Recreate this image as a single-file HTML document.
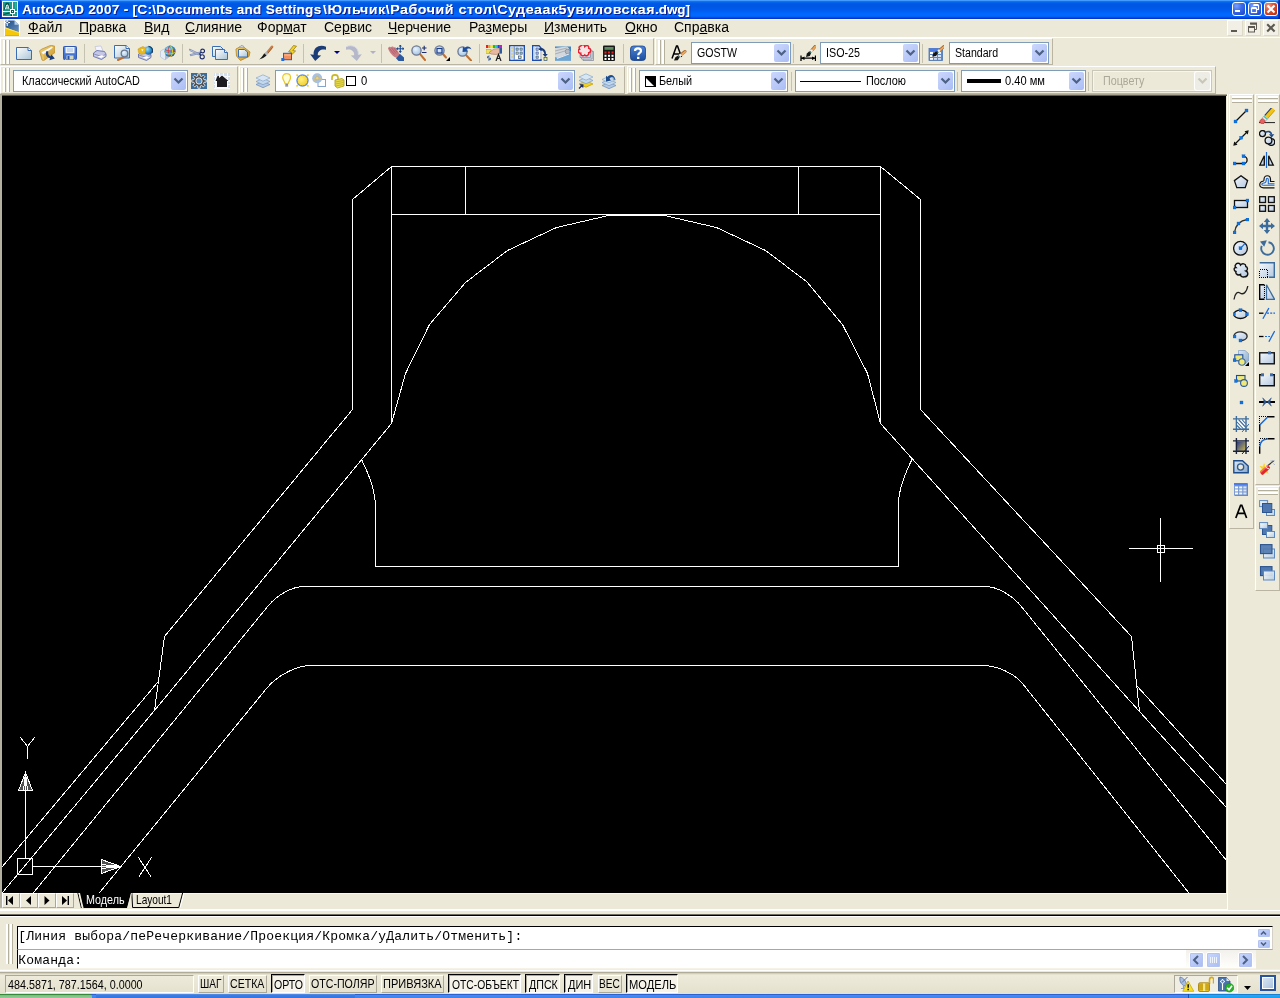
<!DOCTYPE html><html><head><meta charset="utf-8"><title>AutoCAD 2007</title><style>
*{box-sizing:border-box;margin:0;padding:0}
html,body{width:1280px;height:998px;overflow:hidden;background:#ECE9D8;font-family:"Liberation Sans",sans-serif;}
#root{position:absolute;left:0;top:0;width:1280px;height:998px;overflow:hidden;will-change:transform}
.a{position:absolute}
.t{position:absolute;white-space:pre;line-height:1}
#title{left:0;top:0;width:1280px;height:19px;background:linear-gradient(#459AFD 0px,#459AFD 1px,#0A72FA 1px,#0A72FA 2px,#0562EA 2px,#0562EA 3px,#0159E4 3px,#0159E4 4px,#0057E3 4px,#0057E3 5px,#0057E3 5px,#0057E3 6px,#0057E4 6px,#0057E4 7px,#0058E6 7px,#0058E6 8px,#0059E8 8px,#0059E8 9px,#005AEB 9px,#005AEB 10px,#005DF0 10px,#005DF0 11px,#0060F4 11px,#0060F4 12px,#0064F9 12px,#0064F9 13px,#0067FD 13px,#0067FD 14px,#0068FE 14px,#0068FE 15px,#0068FE 15px,#0068FE 16px,#0062F4 16px,#0062F4 17px,#004CDC 17px,#004CDC 18px,#0035CC 18px,#0035CC 19px)}
#title .t{color:#fff;font-weight:bold;font-size:13px;top:3px;transform-origin:0 0;text-shadow:1px 1px 0 #0A1C8C,.4px 0 0 #fff}
#menu{left:0;top:19px;width:1280px;height:18px;background:#ECE9D8;border-top:1px solid #FBF4DD}
#menu .t{font-size:14px;top:0px;color:#000}
#menu u{text-decoration:underline;text-underline-offset:1px}
.tb{position:absolute;background:#EDEADA;border-top:1px solid #fff;border-left:1px solid #fff;border-right:1px solid #B9B5A2;border-bottom:1px solid #B9B5A2;}
.gripv{position:absolute;width:3px;border-right:1px solid #B4B09C;background:#fff}
.griph{position:absolute;height:3px;border-bottom:1px solid #B4B09C;background:#fff}
.sep{position:absolute;width:1px;background:#C5C2B2}
.cb{position:absolute;background:#fff;border:1px solid #7F9DB9;}
.cb .dd{position:absolute;right:1px;top:1px;bottom:1px;width:15px;border-radius:2px;background:linear-gradient(135deg,#CBD7FC,#B9C9F8 55%,#A9BCF4)}
.cb .dd svg{position:absolute;left:2px;top:5px}
.cb.dis{background:#ECE9D8;border-color:#C9C7BA;box-shadow:1px 1px 0 #F8F6EC inset,-1px -1px 0 #F8F6EC inset}
.cb.dis .dd{background:#EEEDE5;box-shadow:0 0 0 1px #fff}
#draw{left:2px;top:96px;width:1224px;height:797px;background:#000}
</style></head><body><div id="root">
<div id="title" class="a"><span class="t" style="left:22px;letter-spacing:0.3px;transform:scaleX(1.0391)">AutoCAD 2007 - [C:\Documents and Settings</span><span class="t" style="left:322.5px;letter-spacing:0.5px;transform:scaleX(1.0927)">\Юльчик\Рабочий стол\Судеаак5увиловская</span><span class="t" style="left:655px;letter-spacing:0px;transform:scaleX(1.0313)">.dwg]</span></div>
<div id="menu" class="a">
<span class="t" style="left:28px"><u>Ф</u>айл</span>
<span class="t" style="left:79px"><u>П</u>равка</span>
<span class="t" style="left:144px"><u>В</u>ид</span>
<span class="t" style="left:185px"><u>С</u>лияние</span>
<span class="t" style="left:257px">Фор<u>м</u>ат</span>
<span class="t" style="left:324px">Се<u>р</u>вис</span>
<span class="t" style="left:388px"><u>Ч</u>ерчение</span>
<span class="t" style="left:469px">Ра<u>з</u>меры</span>
<span class="t" style="left:544px"><u>И</u>зменить</span>
<span class="t" style="left:625px"><u>О</u>кно</span>
<span class="t" style="left:674px">Спр<u>а</u>вка</span>
</div>
<div class="a" style="left:0;top:37px;width:1280px;height:1px;background:#fff"></div>
<div class="a" style="left:1278px;top:0;width:2px;height:19px;background:linear-gradient(90deg,rgba(0,30,160,.45),rgba(0,20,140,.85))"></div><div class="a" style="left:0;top:0;width:2px;height:19px;background:linear-gradient(90deg,rgba(0,20,140,.85),rgba(0,30,160,.3))"></div>
<div class="a" style="left:1232px;top:2px;width:14px;height:14px;border:1px solid #fff;border-radius:3px;background:radial-gradient(circle at 30% 25%,#7CA0F8 0,#3C6CEC 40%,#2450D0 80%,#1C40B0 100%)"><svg class="a" style="left:-1px;top:-1px" width="14" height="14" viewBox="0 0 14 14"><rect x="3" y="8" width="5" height="2" fill="#fff"/></svg></div>
<div class="a" style="left:1248px;top:2px;width:14px;height:14px;border:1px solid #fff;border-radius:3px;background:radial-gradient(circle at 30% 25%,#7CA0F8 0,#3C6CEC 40%,#2450D0 80%,#1C40B0 100%)"><svg class="a" style="left:-1px;top:-1px" width="14" height="14" viewBox="0 0 14 14"><path d="M5.5 3.5 H10.5 V7.5 H9" fill="none" stroke="#fff" stroke-width="1.2"/><path d="M5.5 3 H10.5" stroke="#fff" stroke-width="2"/><rect x="3.5" y="6.5" width="5" height="4" fill="none" stroke="#fff" stroke-width="1.2"/><path d="M3.5 6 H8.5" stroke="#fff" stroke-width="2"/></svg></div>
<div class="a" style="left:1264px;top:2px;width:14px;height:14px;border:1px solid #fff;border-radius:3px;background:radial-gradient(circle at 30% 25%,#F0A088 0,#E0583C 35%,#C83818 75%,#A82810 100%)"><svg class="a" style="left:-1px;top:-1px" width="14" height="14" viewBox="0 0 14 14"><path d="M3.5 3.5 L10.5 10.5 M10.5 3.5 L3.5 10.5" stroke="#fff" stroke-width="2.2"/></svg></div>
<div class="a" style="left:1227px;top:20px;width:16px;height:16px;background:#F1EFE6;border:1px solid;border-color:#fff #DDD9C9 #DDD9C9 #fff"><svg class="a" style="left:-1px;top:-1px" width="16" height="16" viewBox="0 0 16 16"><rect x="4" y="10" width="6" height="2" fill="#5C5A50"/></svg></div>
<div class="a" style="left:1245px;top:20px;width:16px;height:16px;background:#F1EFE6;border:1px solid;border-color:#fff #DDD9C9 #DDD9C9 #fff"><svg class="a" style="left:-1px;top:-1px" width="16" height="16" viewBox="0 0 16 16"><path d="M5.5 4 H11.5 V9.5 H10" fill="none" stroke="#5C5A50" stroke-width="1"/><path d="M5 3.5 H12" stroke="#5C5A50" stroke-width="2"/><rect x="3.5" y="7" width="6" height="5" fill="#F1EFE6" stroke="#5C5A50" stroke-width="1"/><path d="M3 7 H10" stroke="#5C5A50" stroke-width="2"/></svg></div>
<div class="a" style="left:1263px;top:20px;width:16px;height:16px;background:#F1EFE6;border:1px solid;border-color:#fff #DDD9C9 #DDD9C9 #fff"><svg class="a" style="left:-1px;top:-1px" width="16" height="16" viewBox="0 0 16 16"><path d="M4.2 4.2 L11.6 11.6 M11.6 4.2 L4.2 11.6" stroke="#5C5A50" stroke-width="2.1"/></svg></div>
<svg class="a" style="left:2px;top:1px" width="16" height="16" viewBox="0 0 16 16"><rect width="16" height="16" fill="#fff"/><rect x="1" y="1" width="14" height="14" fill="#1C9C8C"/><path d="M2.5 9 L4.5 2.5 L6 2.5 L8 9" fill="none" stroke="#0C4C44" stroke-width="1.6"/><path d="M3.2 8.5 L4.8 4 L5.8 4 L7.2 8.5 M4 7 H6.5" fill="none" stroke="#E8F8F4" stroke-width="1"/><path d="M1 10.5 H8 M12.5 10.5 H15 M10.5 1 V8 M10.5 12.5 V15" stroke="#fff" stroke-width="1"/><path d="M1.5 13.5 L7.5 11.8" stroke="#0C4C44" stroke-width="1.2"/><rect x="8.5" y="8.5" width="4" height="4" fill="#0C5C50" stroke="#fff" stroke-width="1"/><rect x="10" y="10" width="1" height="1" fill="#fff"/><rect x="8.7" y="13.5" width="1.5" height="1.5" fill="#083C34"/><rect x="13" y="1.5" width="1.5" height="6" fill="#2CB4A0"/></svg>
<svg class="a" style="left:4px;top:20px" width="16" height="16" viewBox="0 0 16 16"><defs><linearGradient id="gdoc" x1="0" y1="0" x2="1" y2="1"><stop offset="0" stop-color="#1C4C84"/><stop offset="1" stop-color="#6C94C4"/></linearGradient></defs><rect width="16" height="16" fill="#fff"/><path d="M1.5 .5 H10.5 L14.8 4.8 V13 L1.5 8z" fill="url(#gdoc)"/><path d="M10.5 .5 L14.8 4.8 H10.5z" fill="#B4CCE4"/><path d="M.5 2.5 H6 M3.2 0 V6" stroke="#fff" stroke-width="1"/><circle cx="3.2" cy="2.5" r="1.2" fill="#1C4C84" stroke="#fff" stroke-width=".8"/><path d="M1 7.2 L15 12.2 V15.5 H1z" fill="#F4C808"/><path d="M1 7.2 L15 12.2 V13 L1 8.5z" fill="#FCE468"/><path d="M1 15 H15 V15.8 H1z" fill="#D8A008"/></svg>
<svg width="0" height="0" style="position:absolute"><defs>
<linearGradient id="gp" x1="0" y1="0" x2="1" y2="1"><stop offset="0" stop-color="#fff"/><stop offset="1" stop-color="#A9C4D6"/></linearGradient>
<linearGradient id="gf" x1="0" y1="0" x2="1" y2="1"><stop offset="0" stop-color="#F3D778"/><stop offset="1" stop-color="#C8922A"/></linearGradient>
<linearGradient id="gs" x1="0" y1="0" x2="0" y2="1"><stop offset="0" stop-color="#5C8CE0"/><stop offset="1" stop-color="#3868C4"/></linearGradient>
<radialGradient id="gg" cx=".4" cy=".35" r=".7"><stop offset="0" stop-color="#EAF4FC"/><stop offset="1" stop-color="#9CC0E4"/></radialGradient>
<radialGradient id="gglobe" cx=".35" cy=".35" r=".75"><stop offset="0" stop-color="#9AE0F4"/><stop offset=".6" stop-color="#2E8CCC"/><stop offset="1" stop-color="#1A4C84"/></radialGradient>
<linearGradient id="gh" x1="0" y1="0" x2="0" y2="1"><stop offset="0" stop-color="#4C84D8"/><stop offset="1" stop-color="#1C4C9C"/></linearGradient>
<radialGradient id="gsun" cx=".4" cy=".4" r=".7"><stop offset="0" stop-color="#FFF27A"/><stop offset="1" stop-color="#F0C828"/></radialGradient>
<linearGradient id="gl" x1="0" y1="0" x2="1" y2="1"><stop offset="0" stop-color="#DCE8F4"/><stop offset="1" stop-color="#88A8CC"/></linearGradient>
<linearGradient id="gb" x1="0" y1="0" x2="1" y2="1"><stop offset="0" stop-color="#F4F8FC"/><stop offset="1" stop-color="#B4C8E0"/></linearGradient>
<linearGradient id="gbd" x1="0" y1="0" x2="1" y2="1"><stop offset="0" stop-color="#7C9CC8"/><stop offset="1" stop-color="#3C64A0"/></linearGradient>
</defs></svg>
<div class="tb" style="left:0px;top:38px;width:654px;height:27px"></div>
<div class="gripv" style="left:3px;top:40px;height:24px"></div><div class="gripv" style="left:7px;top:40px;height:24px"></div>
<div class="tb" style="left:655px;top:38px;width:398px;height:27px"></div>
<div class="gripv" style="left:658px;top:40px;height:24px"></div><div class="gripv" style="left:662px;top:40px;height:24px"></div>
<div class="tb" style="left:0px;top:66px;width:238px;height:28px"></div>
<div class="gripv" style="left:3px;top:68px;height:24px"></div><div class="gripv" style="left:7px;top:68px;height:24px"></div>
<div class="tb" style="left:239px;top:66px;width:386px;height:28px"></div>
<div class="gripv" style="left:241px;top:68px;height:24px"></div><div class="gripv" style="left:245px;top:68px;height:24px"></div>
<div class="tb" style="left:627px;top:66px;width:589px;height:28px"></div>
<div class="gripv" style="left:629px;top:68px;height:24px"></div><div class="gripv" style="left:633px;top:68px;height:24px"></div>
<div class="cb" style="left:691px;top:42px;width:100px;height:22px"><span class="t" style="left:5px;top:4px;font-size:12.5px;color:#000;transform-origin:0 0;transform:scaleX(0.847);">GOSTW</span><div class="dd"><svg width="11" height="8" viewBox="0 0 11 8"><path d="M1.5 1.5 L5.5 5.5 L9.5 1.5" fill="none" stroke="#4D6185" stroke-width="2.2"/></svg></div></div>
<div class="cb" style="left:820px;top:42px;width:100px;height:22px"><span class="t" style="left:5px;top:4px;font-size:12.5px;color:#000;transform-origin:0 0;transform:scaleX(0.858);">ISO-25</span><div class="dd"><svg width="11" height="8" viewBox="0 0 11 8"><path d="M1.5 1.5 L5.5 5.5 L9.5 1.5" fill="none" stroke="#4D6185" stroke-width="2.2"/></svg></div></div>
<div class="cb" style="left:949px;top:42px;width:100px;height:22px"><span class="t" style="left:5px;top:4px;font-size:12.5px;color:#000;transform-origin:0 0;transform:scaleX(0.848);">Standard</span><div class="dd"><svg width="11" height="8" viewBox="0 0 11 8"><path d="M1.5 1.5 L5.5 5.5 L9.5 1.5" fill="none" stroke="#4D6185" stroke-width="2.2"/></svg></div></div>
<div class="cb" style="left:13px;top:70px;width:175px;height:22px"><span class="t" style="left:8px;top:4px;font-size:12.5px;color:#000;transform-origin:0 0;transform:scaleX(0.869);">Классический AutoCAD</span><div class="dd"><svg width="11" height="8" viewBox="0 0 11 8"><path d="M1.5 1.5 L5.5 5.5 L9.5 1.5" fill="none" stroke="#4D6185" stroke-width="2.2"/></svg></div></div>
<div class="cb" style="left:275px;top:70px;width:300px;height:22px"><svg class="a" style="left:6px;top:2px" width="9" height="14" viewBox="0 0 9 14"><path d="M3.2 13 h3 M3.4 11.6h2.6" stroke="#6C78A8" stroke-width="1.1"/><path d="M3 10.6 C3 8.5 .7 7.5 .7 4.6 C.7 2 2.3 .7 4.6 .7 C7 .7 8.5 2 8.5 4.6 C8.5 7.5 6.3 8.5 6.3 10.6z" fill="#FFFCD8" stroke="#E8C828" stroke-width="1.2"/></svg><svg class="a" style="left:20px;top:3px" width="13" height="13" viewBox="0 0 13 13"><path d="M.5 .5 L2.5 2.5 M12.5 .5 L10.5 2.5 M.5 12.5 L2.5 10.5 M12.5 12.5 L10.5 10.5" stroke="#F0D020" stroke-width="1.6"/><circle cx="6.5" cy="6.5" r="5.6" fill="url(#gsun)" stroke="#2C6CCC" stroke-width="1"/></svg><svg class="a" style="left:36px;top:2px" width="14" height="14" viewBox="0 0 14 14"><rect x="6" y="6.5" width="7.5" height="7" fill="#fff" stroke="#88A4CC" stroke-width="1"/><circle cx="5.2" cy="5.2" r="5" fill="#A4C0E4"/><circle cx="5.2" cy="5.2" r="1.8" fill="#E8D080" stroke="#C8B060" stroke-width=".6"/><path d="M5.2 1.2v1.8M5.2 7.4v1.8M1.2 5.2h1.8M7.4 5.2h1.8M2.4 2.4l1.3 1.3M6.7 6.7l1.3 1.3M8 2.4L6.7 3.7M3.7 6.7L2.4 8" stroke="#D8C078" stroke-width="1"/></svg><svg class="a" style="left:54px;top:2px" width="16" height="16" viewBox="0 0 16 16"><path d="M2 7 V4.5 C2 1 8 1 8 4.5 V6.5" fill="none" stroke="#C8B820" stroke-width="1.6"/><path d="M5 7 L12 5.5 L14 7 V13 L7.5 15 L5 13z" fill="#E8DC50" stroke="#A89810" stroke-width=".8"/><path d="M5.5 9 L13.5 7.5 M5.5 11 L13.5 9.5 M5.5 13 L13.5 11.5" stroke="#B8A820" stroke-width=".7"/></svg><div class="a" style="left:70px;top:5px;width:10px;height:10px;border:1px solid #000;background:#fff"></div><span class="t" style="left:85px;top:4px;font-size:12.5px;color:#000;transform-origin:0 0;transform:scaleX(0.9);">0</span><div class="dd"><svg width="11" height="8" viewBox="0 0 11 8"><path d="M1.5 1.5 L5.5 5.5 L9.5 1.5" fill="none" stroke="#4D6185" stroke-width="2.2"/></svg></div></div>
<div class="cb" style="left:639px;top:70px;width:149px;height:22px"><svg class="a" style="left:5px;top:5px" width="11" height="11" viewBox="0 0 11 11"><rect width="11" height="11" fill="#000"/><path d="M1 2 L9 10 H1z" fill="#fff"/></svg><span class="t" style="left:19px;top:4px;font-size:12.5px;color:#000;transform-origin:0 0;transform:scaleX(0.868);">Белый</span><div class="dd"><svg width="11" height="8" viewBox="0 0 11 8"><path d="M1.5 1.5 L5.5 5.5 L9.5 1.5" fill="none" stroke="#4D6185" stroke-width="2.2"/></svg></div></div>
<div class="cb" style="left:795px;top:70px;width:160px;height:22px"><div class="a" style="left:4px;top:10px;width:61px;height:1px;background:#000"></div><span class="t" style="left:70px;top:4px;font-size:12.5px;color:#000;transform-origin:0 0;transform:scaleX(0.87);">Послою</span><div class="dd"><svg width="11" height="8" viewBox="0 0 11 8"><path d="M1.5 1.5 L5.5 5.5 L9.5 1.5" fill="none" stroke="#4D6185" stroke-width="2.2"/></svg></div></div>
<div class="cb" style="left:961px;top:70px;width:125px;height:22px"><div class="a" style="left:5px;top:8px;width:34px;height:4px;background:#000"></div><span class="t" style="left:43px;top:4px;font-size:12.5px;color:#000;transform-origin:0 0;transform:scaleX(0.889);">0.40 мм</span><div class="dd"><svg width="11" height="8" viewBox="0 0 11 8"><path d="M1.5 1.5 L5.5 5.5 L9.5 1.5" fill="none" stroke="#4D6185" stroke-width="2.2"/></svg></div></div>
<div class="cb dis" style="left:1092px;top:70px;width:120px;height:22px"><span class="t" style="left:10px;top:4px;font-size:12.5px;color:#ACA899;transform-origin:0 0;transform:scaleX(0.86);">Поцвету</span><div class="dd"><svg width="11" height="8" viewBox="0 0 11 8"><path d="M1.5 1.5 L5.5 5.5 L9.5 1.5" fill="none" stroke="#C9C7BA" stroke-width="2.2"/></svg></div></div>
<svg class="a" style="left:16px;top:45px" width="16" height="16" viewBox="0 0 16 16"><path d="M.5 2.5 H12 L15.5 5.5 V14.5 H.5z" fill="url(#gp)" stroke="#3A6EB4"/><path d="M12 2.5 V5.5 H15.5" fill="#fff" stroke="#3A6EB4"/></svg>
<svg class="a" style="left:39px;top:45px" width="16" height="16" viewBox="0 0 16 16"><path d="M.5 5.8 L3 4 L12 .2 L15.8 1.2 L16 7.5 L4.5 15.8 L3 15z" fill="url(#gf)" stroke="#B8892C" stroke-width=".7"/><path d="M2.5 7.2 L13 1.5 L13.8 2.8 L4 9.5z" fill="#F4F8FC"/><path d="M3 8.5 L4.2 9.2 L5 15 L3.5 14.5z" fill="#E8C868"/><path d="M7.5 6 C6 9.5 7.5 12.5 11 13.2 L10.5 15.3 L15.8 13.5 L12.5 9.5 L11.8 11.3 C9.8 10.8 8.8 9 9.3 6.5z" fill="#1C3C78"/></svg>
<svg class="a" style="left:62px;top:45px" width="16" height="16" viewBox="0 0 16 16"><rect x="1.5" y="1.5" width="13" height="13" rx=".8" fill="url(#gs)" stroke="#3058B0"/><rect x="3.5" y="2" width="9" height="6.2" fill="#EEF4FC"/><path d="M5 4h6M5 6h6" stroke="#9CB4DC" stroke-width=".9"/><rect x="4.5" y="10.5" width="7" height="4" fill="#D0D8C4"/><rect x="5.5" y="11" width="2" height="3.5" fill="#2850A8"/><path d="M3 14.8h1.2M12 14.8h1.2" stroke="#F0F4FC" stroke-width=".8"/></svg>
<svg class="a" style="left:91px;top:45px" width="16" height="16" viewBox="0 0 16 16"><g transform="translate(1,0)"><path d="M3 1.5 L9 1 L11 6 L4.5 7z" fill="#F4F4FA" stroke="#B4B8D4" stroke-width=".6"/><path d="M1.5 8 L5 5.5 L12.5 6.5 L14 9 L14 11.5 L9.5 14.5 L1.5 11.5z" fill="#C4C8E4" stroke="#5C64A4" stroke-width=".8"/><path d="M2 9 L9.5 11.5 L14 9" fill="none" stroke="#7C84BC" stroke-width=".8"/><path d="M5.5 11.5 L9 13 L12.5 11 L10 10.2z" fill="#fff"/></g></svg>
<svg class="a" style="left:114px;top:45px" width="16" height="16" viewBox="0 0 16 16"><path d="M.5 .5 H12 L15.5 3.5 V13 H.5z" fill="url(#gp)" stroke="#3A6EB4"/><path d="M12 .5 V3.5 H15.5" fill="#fff" stroke="#3A6EB4"/><path d="M12.809999999999999 10.809999999999999 L4 15" stroke="#C07030" stroke-width="2" stroke-linecap="round"/><circle cx="10.5" cy="8.5" r="3.3" fill="url(#gg)" stroke="#6C7890" stroke-width="1.3"/></svg>
<svg class="a" style="left:137px;top:45px" width="16" height="16" viewBox="0 0 16 16"><g transform="translate(0,1)"><path d="M3 1.5 L9 1 L11 6 L4.5 7z" fill="#F4F4FA" stroke="#B4B8D4" stroke-width=".6"/><path d="M1.5 8 L5 5.5 L12.5 6.5 L14 9 L14 11.5 L9.5 14.5 L1.5 11.5z" fill="#C4C8E4" stroke="#5C64A4" stroke-width=".8"/><path d="M2 9 L9.5 11.5 L14 9" fill="none" stroke="#7C84BC" stroke-width=".8"/><path d="M5.5 11.5 L9 13 L12.5 11 L10 10.2z" fill="#fff"/></g><circle cx="11.5" cy="5.5" r="4.3" fill="url(#gglobe)"/><path d="M11.5 1.3 a4.3 4.3 0 0 1 3.5 6.5" stroke="#1C3C64" stroke-width="1.2" fill="none"/><path d="M1 4 L6 1.5 L9 3.5 L8 8.5 L4 9.5 L1.5 7.5z" fill="#E8B820" stroke="#C89810" stroke-width=".5"/><path d="M4 4.5 L6.5 4 L5.5 6.5z" fill="#FFF8C8"/></svg>
<svg class="a" style="left:160px;top:45px" width="16" height="16" viewBox="0 0 16 16"><path d="M.5 6 L5 3.5 L9 5.5 L9 12 L5 15 L.5 12z" fill="#E4ECF8" stroke="#B0BCD4" stroke-width=".6"/><path d="M5 8.5 L9 5.5 L9 12 L5 15z" fill="#B4BCCC"/><circle cx="10" cy="6.2" r="5.6" fill="url(#gglobe)"/><path d="M5 4.5 C8 6.5 13 6.5 15.3 4.5 M10 .6 C7 4 8 9 10.5 11.7" stroke="#D83838" stroke-width="1" fill="none"/><path d="M4.6 7.5 C8 10 13 9 15.4 7 M10 .6 C13 3 13.5 9 10.5 11.7" stroke="#E8D020" stroke-width="1" fill="none"/></svg>
<svg class="a" style="left:189px;top:45px" width="16" height="16" viewBox="0 0 16 16"><path d="M.5 4 L11.5 9.2 L10.5 10.2 L.8 5.6z" fill="#D4DCF0" stroke="#6C7CAC" stroke-width=".7"/><path d="M1 9.6 L11 7 L11.6 8.2 L1.6 10.8z" fill="#C8D4EC" stroke="#6C7CAC" stroke-width=".7"/><circle cx="13.6" cy="6" r="1.9" fill="none" stroke="#1C2C6C" stroke-width="1.1"/><circle cx="13.2" cy="11.8" r="2.1" fill="none" stroke="#1C2C6C" stroke-width="1.1"/><path d="M10.5 8.6 L12.3 7.2 M10.5 8.8 L11.8 10.3" stroke="#1C2C6C" stroke-width="1.2"/></svg>
<svg class="a" style="left:212px;top:45px" width="16" height="16" viewBox="0 0 16 16"><path d="M.5 1.5 H8.5 L11.5 4.5 V11.5 H.5z" fill="url(#gp)" stroke="#3A6EB4"/><path d="M3.5 4.5 H12.5 L15.5 7.5 V14.5 H3.5z" fill="url(#gp)" stroke="#3A6EB4"/><path d="M12.5 4.5 V7.5 H15.5" fill="#fff" stroke="#3A6EB4"/></svg>
<svg class="a" style="left:235px;top:45px" width="16" height="16" viewBox="0 0 16 16"><path d="M1 4 L7 .8 L15 7 L14 11.5 L5.5 15.5 L1.5 11z" fill="url(#gf)" stroke="#B8892C" stroke-width=".9"/><path d="M4.5 2 L6 .5 L8.5 1 L9 3z" fill="#D8DCE4" stroke="#8890A0" stroke-width=".6"/><path d="M3.5 4.5 H9.5 L12.5 7 V12 H3.5z" fill="url(#gp)" stroke="#3A6EB4"/></svg>
<svg class="a" style="left:258px;top:45px" width="16" height="16" viewBox="0 0 16 16"><path d="M14 1.8 L9 8" stroke="#C88048" stroke-width="2.6" stroke-linecap="round"/><path d="M14.6 2.4 L9.8 8.4" stroke="#8C5428" stroke-width=".7"/><path d="M9.2 7.4 L7.4 9.4" stroke="#B0B4BC" stroke-width="2.6"/><path d="M6.2 8.2 L8.6 10.6 C6.6 12.6 3.8 13.8 1.2 14.4 C3 12.8 5 10.8 6.2 8.2z" fill="#181818"/></svg>
<svg class="a" style="left:281px;top:45px" width="16" height="16" viewBox="0 0 16 16"><path d="M12.5 .5 L15.5 1.2 L11.8 5.5 L14.6 6 L8.2 12 L10.2 7.2 L7.6 6.8z" fill="#F4D020" stroke="#8C7408" stroke-width=".7"/><rect x="2.5" y="8.3" width="8" height="6.4" fill="#F09060" stroke="#2C5CB8" stroke-width="1"/><path d="M3.2 9 H9.8 V11 H3.2z" fill="#F8B088" opacity=".7"/><rect x=".3" y="13" width="3" height="3" fill="#1C6CDC"/></svg>
<svg class="a" style="left:310px;top:45px" width="16" height="16" viewBox="0 0 16 16"><path d="M16 1.8 C10 -1.2 3 2 3.6 9.8 L.2 9.3 L5.2 16 L11.2 10.6 L7.8 10.2 C7.6 6 11 3.8 16 4.8z" fill="#1C3C78"/></svg>
<svg class="a" style="left:346px;top:45px" width="16" height="16" viewBox="0 0 16 16"><path d="M0 1.8 C6 -1.2 13 2 12.4 9.8 L15.8 9.3 L10.8 16 L4.8 10.6 L8.2 10.2 C8.4 6 5 3.8 0 4.8z" fill="#B4B8C8"/><path d="M0 1.8 C6 -1.2 13 2 12.4 9.8" fill="none" stroke="#D8DAE4" stroke-width="1"/></svg>
<svg class="a" style="left:388px;top:45px" width="16" height="16" viewBox="0 0 16 16"><path d="M0 3.2 C.5 1.5 2 1.2 3 2.2 C3.5 1 5.5 1.2 6 2.6 C7 2 8 2.6 8.4 3.8 L11.5 9 L8.5 12.8 C5 11.5 1.5 8 0 3.2z" fill="#CC7C84"/><path d="M1.5 3.5 L6.5 9.5 M3.5 2.8 L8 8.6 M6 3 L9.3 7.6" stroke="#A85860" stroke-width=".7"/><path d="M8 13.2 L11.8 8.8 L16 12.5 L16 16 L10.5 16z" fill="#2C5AA0"/><path d="M12.3 0 v7.4 M8.6 3.7 h7.4" stroke="#1C4C94" stroke-width="1.1"/><path d="M12.3 -.5 l1.6 2h-3.2z M12.3 7.9 l1.6 -2h-3.2z M8.1 3.7 l2 -1.6v3.2z M16.5 3.7 l-2 -1.6v3.2z" fill="#1C4C94"/></svg>
<svg class="a" style="left:411px;top:45px" width="16" height="16" viewBox="0 0 16 16"><path d="M8.719999999999999 8.719999999999999 L14 15" stroke="#C07030" stroke-width="2" stroke-linecap="round"/><circle cx="5.5" cy="5.5" r="4.6" fill="url(#gg)" stroke="#6C7890" stroke-width="1.3"/><path d="M11 7.5h4.5 M11 3h4.5 M13.2 .8v4.4" stroke="#1C2C6C" stroke-width="1.1"/></svg>
<svg class="a" style="left:434px;top:45px" width="16" height="16" viewBox="0 0 16 16"><path d="M8.719999999999999 8.719999999999999 L12 12.5" stroke="#C07030" stroke-width="2" stroke-linecap="round"/><circle cx="5.5" cy="5.5" r="4.6" fill="url(#gg)" stroke="#6C7890" stroke-width="1.3"/><rect x="3" y="3.5" width="5" height="4.5" fill="none" stroke="#1C3C8C" stroke-width="1.2"/><path d="M16 12 V16 H12z" fill="#000"/></svg>
<svg class="a" style="left:457px;top:45px" width="16" height="16" viewBox="0 0 16 16"><path d="M8.719999999999999 9.719999999999999 L14 15.5" stroke="#C07030" stroke-width="2" stroke-linecap="round"/><circle cx="5.5" cy="6.5" r="4.6" fill="url(#gg)" stroke="#6C7890" stroke-width="1.3"/><path d="M14.5 4.5 C13.5 1 9.5 .5 7.5 3 L6 1.5 L5.5 7 L11 6.5 L9.3 4.8 C10.5 3.2 13 3.2 14.5 4.5z" fill="#1C4C9C"/></svg>
<svg class="a" style="left:486px;top:45px" width="16" height="16" viewBox="0 0 16 16"><rect x="0" y="0" width="2.3" height="3" fill="#E82020"/><rect x="2.3" y="0" width="2.3" height="3" fill="#F0A020"/><rect x="4.6" y="0" width="2.3" height="3" fill="#F0F020"/><rect x="6.9" y="0" width="2.3" height="3" fill="#20C020"/><rect x="9.2" y="0" width="2.3" height="3" fill="#20C0E0"/><rect x="11.5" y="0" width="2.3" height="3" fill="#2040E0"/><rect x="13.8" y="0" width="2.2" height="3" fill="#C020C0"/><rect x="0" y="4.5" width="5" height="4" fill="#F0E060" stroke="#A89820" stroke-width=".5"/><path d="M3 7.5 L8 4 L14 3.5 L15.5 8 L10 9.5 L5 9z" fill="#E8B8A0" stroke="#A87860" stroke-width=".6"/><rect x="13.5" y="3" width="2.5" height="5.5" fill="#2C5AA0"/><path d="M3.5 11 C1 11 1 13 3 13 C5 13 5 15 2 15" fill="none" stroke="#3C5C94" stroke-width="1.2"/><path d="M10 16 L12.5 9.5 L15 16 M11 13.5 h3" fill="none" stroke="#202020" stroke-width="1.2"/></svg>
<svg class="a" style="left:509px;top:45px" width="16" height="16" viewBox="0 0 16 16"><rect x=".7" y=".7" width="14.6" height="14.6" fill="#fff" stroke="#1C4CAC" stroke-width="1.4"/><rect x="1.5" y="1.5" width="3" height="13" fill="#C8DCF4"/><path d="M3 2.5v1M3 5.5v1M3 8.5v1M3 11.5v1" stroke="#E8C020" stroke-width="1.6"/><path d="M5.2 1.5v13" stroke="#1C4CAC" stroke-width=".8"/><rect x="7" y="3" width="2.2" height="2.2" fill="#A8E0A0" stroke="#2C4C8C" stroke-width=".7"/><rect x="11" y="3" width="2.2" height="2.2" fill="#A8E0A0" stroke="#2C4C8C" stroke-width=".7"/><rect x="7" y="7" width="2.2" height="2.2" fill="#F0F060" stroke="#2C4C8C" stroke-width=".7"/><rect x="11" y="7" width="2.2" height="2.2" fill="#A8E0A0" stroke="#2C4C8C" stroke-width=".7"/><rect x="9.5" y="11" width="2.6" height="2.6" fill="#F0F060" stroke="#2C4C8C" stroke-width=".7"/></svg>
<svg class="a" style="left:532px;top:45px" width="16" height="16" viewBox="0 0 16 16"><path d="M.7 .7 H7 L9 3 V15.3 H.7z" fill="#fff" stroke="#1C4CAC" stroke-width="1.4"/><rect x="1.5" y="1.5" width="1.5" height="13" fill="#C8DCF4"/><rect x="4" y="3" width="2.2" height="2.2" fill="#C8D8F0" stroke="#2C4C8C" stroke-width=".7"/><rect x="4" y="7" width="2.2" height="2.2" fill="#C8D8F0" stroke="#2C4C8C" stroke-width=".7"/><rect x="4" y="11" width="2.2" height="2.2" fill="#A8E0A0" stroke="#2C4C8C" stroke-width=".7"/><rect x="8" y="6" width="2" height="8" fill="#C8D0DC"/><path d="M7 3.5 C11 2 14 5 14 9 L15.8 9 L13.2 12 L10.6 9 L12.3 9 C12 6 10 4.5 7 5z" fill="#1C3C78"/><rect x="12" y="12.5" width="3" height="3" fill="#F0F060" stroke="#2C4C8C" stroke-width=".7"/></svg>
<svg class="a" style="left:555px;top:45px" width="16" height="16" viewBox="0 0 16 16"><rect x="0" y="1.5" width="16" height="14" fill="#3C84C4"/><path d="M0 11 L16 6 V15.5 H0z" fill="#6CA4D4"/><path d="M0 3 L11 1.5 C14 2 15 5 14.5 8 L3 13 L0 12z" fill="#D4D8DC"/><path d="M0 6 L12 3 M0 9 L13 5" stroke="#9CA4AC" stroke-width=".8"/><circle cx="12.5" cy="6.5" r="2.3" fill="#B4B8C0" stroke="#80868C" stroke-width=".7"/><path d="M2 13.5 L14 9" stroke="#E8ECF0" stroke-width="1"/></svg>
<svg class="a" style="left:578px;top:45px" width="16" height="16" viewBox="0 0 16 16"><path d="M5 6.5 H15.5 V15.5 H5z" fill="#D0D4DC" stroke="#7C8494" stroke-width=".7"/><path d="M3.5 5 H14 V14 H3.5z" fill="#E4E8F0" stroke="#7C8494" stroke-width=".7"/><path d="M2 3.5 H12.5 V12.5 H2z" fill="#C8D8EC" stroke="#7C8494" stroke-width=".7"/><g transform="translate(-.6 -.8) scale(1.13)"><path d="M3 1.5 C4.5 -.5 6.5 1 6.5 2 C8 .5 10.5 1 10 3.5 C12.5 4 12 7.5 10 7.5 C10.5 10 7.5 11 6.5 9.5 C5 11 2.5 10 3 8 C.5 8 0 5 2 4.5 C1 3 1.5 1.5 3 1.5z" fill="#F4E4E4" stroke="#E82030" stroke-width="1.3"/></g></svg>
<svg class="a" style="left:601px;top:45px" width="16" height="16" viewBox="0 0 16 16"><rect x="2" y=".5" width="12" height="15.5" rx="1" fill="#181818"/><rect x="3.5" y="2" width="9" height="2.8" fill="#5C8C5C"/><rect x="3.5" y="6.5" width="2" height="2" fill="#E82020"/><rect x="7" y="6.5" width="2" height="2" fill="#E82020"/><rect x="10.5" y="6.5" width="2" height="2" fill="#E82020"/><rect x="3.5" y="9.8" width="2" height="2" fill="#fff"/><rect x="7" y="9.8" width="2" height="2" fill="#fff"/><rect x="10.5" y="9.8" width="2" height="2" fill="#fff"/><rect x="3.5" y="13" width="2" height="2" fill="#fff"/><rect x="7" y="13" width="2" height="2" fill="#fff"/><rect x="10.5" y="13" width="2" height="2" fill="#fff"/></svg>
<svg class="a" style="left:630px;top:45px" width="16" height="16" viewBox="0 0 16 16"><rect x=".5" y="1" width="15" height="14.5" rx="3" fill="url(#gh)" stroke="#184088" stroke-width=".8"/><path d="M5 6 C5 2.5 11 2.5 11 6 C11 8 8.2 8 8.2 10.3" fill="none" stroke="#fff" stroke-width="2.2"/><rect x="7" y="11.8" width="2.4" height="2.2" fill="#fff"/></svg>
<div class="sep" style="left:84px;top:44px;height:19px"></div>
<div class="sep" style="left:182px;top:44px;height:19px"></div>
<div class="sep" style="left:303px;top:44px;height:19px"></div>
<div class="sep" style="left:381px;top:44px;height:19px"></div>
<div class="sep" style="left:479px;top:44px;height:19px"></div>
<div class="sep" style="left:623px;top:44px;height:19px"></div>
<svg class="a" style="left:334px;top:51px" width="6" height="3" viewBox="0 0 6 3"><path d="M0 0h6L3 3z" fill="#00008B"/></svg>
<svg class="a" style="left:370px;top:51px" width="6" height="3" viewBox="0 0 6 3"><path d="M0 0h6L3 3z" fill="#B0B0C8"/></svg>
<svg class="a" style="left:671px;top:45px" width="16" height="16" viewBox="0 0 16 16"><path d="M1 13.5 L5.5 1 L6.5 1 L10.5 12 M3 9 H8.5" fill="none" stroke="#000" stroke-width="1.5"/><path d="M14.0 6.5 L10.0 9.7" stroke="#A86428" stroke-width="3" stroke-linecap="round"/><path d="M14.2 6.7 L10.2 10.0" stroke="#E8A860" stroke-width="1.8" stroke-linecap="round"/><path d="M10.0 9.7 L8.5 11.0" stroke="#F4F4F4" stroke-width="2.4"/><path d="M8.5 11.0 L7.6 11.7" stroke="#287068" stroke-width="2.4"/><path d="M6.8 10.7 L8.4 12.7 L6.8 15.2 L3.0 15.5 L4.4 12.3z" fill="#141414"/></svg>
<svg class="a" style="left:800px;top:45px" width="16" height="16" viewBox="0 0 16 16"><path d="M1 10.5v5.5M15.5 10.5v5.5M1 13.2h14.5" stroke="#000" stroke-width="1.3" fill="none"/><path d="M1 13.2l3.5-1.8v3.6zM15.5 13.2l-3.5-1.8v3.6z" fill="#000"/><path d="M15.5 1.0 L12.1 5.0" stroke="#A86428" stroke-width="3" stroke-linecap="round"/><path d="M15.7 1.2 L12.3 5.2" stroke="#E8A860" stroke-width="1.8" stroke-linecap="round"/><path d="M12.1 5.0 L10.8 6.5" stroke="#F4F4F4" stroke-width="2.4"/><path d="M10.8 6.5 L10.0 7.4" stroke="#287068" stroke-width="2.4"/><path d="M9.0 6.5 L11.0 8.2 L9.8 11.0 L6.0 12.0 L6.9 8.5z" fill="#141414"/></svg>
<svg class="a" style="left:928px;top:45px" width="16" height="16" viewBox="0 0 16 16"><rect x="1" y="3.5" width="13.5" height="12" fill="#6088C4" stroke="#4C74B0" stroke-width=".8"/><rect x="1" y="3.5" width="9.5" height="2.5" fill="#4C7CE8"/><rect x="2" y="7" width="3" height="2" fill="#fff"/><rect x="6" y="7" width="3" height="2" fill="#E8F0FC"/><rect x="10" y="7" width="3" height="2" fill="#E8F0FC"/><rect x="2" y="10" width="3" height="2" fill="#fff"/><rect x="6" y="10" width="3" height="2" fill="#D8E4F8"/><rect x="10" y="10" width="3" height="2" fill="#D8E4F8"/><rect x="2" y="13" width="3" height="1.8" fill="#fff"/><rect x="6" y="13" width="3" height="1.8" fill="#D0DCF4"/><rect x="10" y="13" width="3" height="1.8" fill="#C8D8F4"/><path d="M16.0 1.5 L11.7 5.1" stroke="#A86428" stroke-width="3" stroke-linecap="round"/><path d="M16.2 1.7 L11.9 5.3" stroke="#E8A860" stroke-width="1.8" stroke-linecap="round"/><path d="M11.7 5.1 L10.0 6.5" stroke="#F4F4F4" stroke-width="2.4"/><path d="M10.0 6.5 L9.0 7.3" stroke="#287068" stroke-width="2.4"/><path d="M8.2 6.3 L9.9 8.3 L8.0 11.0 L4.0 11.5 L5.6 8.1z" fill="#141414"/></svg>
<div class="sep" style="left:793px;top:44px;height:19px"></div>
<div class="sep" style="left:922px;top:44px;height:19px"></div>
<svg class="a" style="left:191px;top:73px" width="16" height="16" viewBox="0 0 16 16"><rect width="16" height="16" fill="#3C6C9C"/><path d="M15.21 6.84 L15.21 9.16 L13.05 9.24 L12.45 10.70 L13.92 12.27 L12.27 13.92 L10.70 12.45 L9.24 13.05 L9.16 15.21 L6.84 15.21 L6.76 13.05 L5.30 12.45 L3.73 13.92 L2.08 12.27 L3.55 10.70 L2.95 9.24 L0.79 9.16 L0.79 6.84 L2.95 6.76 L3.55 5.30 L2.08 3.73 L3.73 2.08 L5.30 3.55 L6.76 2.95 L6.84 0.79 L9.16 0.79 L9.24 2.95 L10.70 3.55 L12.27 2.08 L13.92 3.73 L12.45 5.30 L13.05 6.76z" fill="#484848" stroke="#F0F0F0" stroke-width=".9"/><circle cx="8" cy="8" r="3.1" fill="#5C8CBC" stroke="#E8E8E8" stroke-width="1"/></svg>
<svg class="a" style="left:214px;top:73px" width="16" height="16" viewBox="0 0 16 16"><rect width="16" height="16" fill="#D4E0F0"/><path d="M0 3.5h16M0 7.5h16M0 11.5h16M0 15.5h16M1.5 0v16M5.5 0v16M9.5 0v16M13.5 0v16" stroke="#F8FAFC" stroke-width="1"/><path d="M1.5 8 L8 2.5 L14.5 8 L13 8 L13 14 L3 14 L3 8z" fill="#fff" stroke="#fff" stroke-width="1.6"/><path d="M1.5 8 L3.5 3 L5 3 L5 5 L8 2.5 L14.5 8 L13 8 L13 14 L3 14 L3 8z" fill="#1C1C20"/></svg>
<svg class="a" style="left:255px;top:73px" width="16" height="16" viewBox="0 0 16 16"><path d="M1 11.5 L8 8.3 L15 11.5 L8 14.7z" fill="#B0C8E4" stroke="#6C8CB8" stroke-width=".7"/><path d="M1 8.5 L8 5.3 L15 8.5 L8 11.7z" fill="#C4D8EC" stroke="#7C9CC4" stroke-width=".7"/><path d="M1 5 L8 1.7999999999999998 L15 5 L8 8.2z" fill="#D8E6F4" stroke="#88A8CC" stroke-width=".7"/></svg>
<svg class="a" style="left:578px;top:73px" width="16" height="16" viewBox="0 0 16 16"><path d="M1 11 L8 7.8 L15 11 L8 14.2z" fill="#F0D020" stroke="#B89C10" stroke-width=".7"/><path d="M1 7.5 L8 4.3 L15 7.5 L8 10.7z" fill="#C4D8EC" stroke="#7C9CC4" stroke-width=".7"/><path d="M1 4 L8 0.7999999999999998 L15 4 L8 7.2z" fill="#D8E6F4" stroke="#88A8CC" stroke-width=".7"/><path d="M1 15.5 L4.5 12 M2 11.8 H4.8 V14.6" stroke="#1C2C6C" stroke-width="1.3" fill="none"/></svg>
<svg class="a" style="left:601px;top:73px" width="16" height="16" viewBox="0 0 16 16"><path d="M1 12.5 L8 9.3 L15 12.5 L8 15.7z" fill="#B0C8E4" stroke="#6C8CB8" stroke-width=".7"/><path d="M1 9.5 L8 6.3 L15 9.5 L8 12.7z" fill="#C4D8EC" stroke="#7C9CC4" stroke-width=".7"/><path d="M1 6.5 L8 3.3 L15 6.5 L8 9.7z" fill="#D8E6F4" stroke="#88A8CC" stroke-width=".7"/><path d="M14 6.5 C14 1.5 8.5 .5 6.5 4 L5 2.8 L5 8.5 L10.5 7.5 L8.5 5.8 C10 3.5 12.5 4.5 12 7z" fill="#1C4C8C"/><circle cx="11" cy="6" r="2" fill="#B8D0E8" opacity=".8"/></svg>
<div class="sep" style="left:791px;top:72px;height:19px"></div>
<div class="sep" style="left:957px;top:72px;height:19px"></div>
<div class="sep" style="left:1088px;top:72px;height:19px"></div>
<div class="a" style="left:1228px;top:94px;width:52px;height:815px;background:#ECE9D8"></div>
<div class="tb" style="left:1229px;top:94px;width:25px;height:435px"></div>
<div class="griph" style="left:1232px;top:96px;width:20px"></div><div class="griph" style="left:1232px;top:100px;width:20px"></div>
<div class="tb" style="left:1255px;top:94px;width:25px;height:391px"></div>
<div class="griph" style="left:1258px;top:96px;width:20px"></div><div class="griph" style="left:1258px;top:100px;width:20px"></div>
<div class="tb" style="left:1255px;top:486px;width:25px;height:105px"></div>
<div class="griph" style="left:1258px;top:488px;width:20px"></div><div class="griph" style="left:1258px;top:492px;width:20px"></div>
<svg class="a" style="left:1233px;top:108px" width="16" height="16" viewBox="0 0 16 16"><path d="M2.5 13.5 L13.5 2.5" stroke="#101010" stroke-width="1.3"/><rect x="1.0" y="12.0" width="3" height="3" fill="#0C74E4" stroke="#0858B4" stroke-width=".3"/><rect x="12.0" y="1.0" width="3" height="3" fill="#0C74E4" stroke="#0858B4" stroke-width=".3"/></svg>
<svg class="a" style="left:1233px;top:130px" width="16" height="16" viewBox="0 0 16 16"><path d="M2 14 L14 2" stroke="#101010" stroke-width="1.3"/><path d="M.3 15.7 L1.2 11.5 L4.5 14.8z M15.7 .3 L11.5 1.2 L14.8 4.5z" fill="#101010"/><rect x="6.699999999999999" y="6.3" width="3" height="3" fill="#0C74E4" stroke="#0858B4" stroke-width=".3"/></svg>
<svg class="a" style="left:1233px;top:152px" width="16" height="16" viewBox="0 0 16 16"><path d="M1.5 11.5 H10.5 A3.6 3.6 0 0 0 10.5 4.3" fill="none" stroke="#101010" stroke-width="1.3"/><rect x="0.0" y="10.0" width="3" height="3" fill="#0C74E4" stroke="#0858B4" stroke-width=".3"/><rect x="9.0" y="10.0" width="3" height="3" fill="#0C74E4" stroke="#0858B4" stroke-width=".3"/><rect x="9.0" y="2.8" width="3" height="3" fill="#0C74E4" stroke="#0858B4" stroke-width=".3"/></svg>
<svg class="a" style="left:1233px;top:174px" width="16" height="16" viewBox="0 0 16 16"><path d="M8 1.8 L14.6 6.6 L12.2 13.6 L3.8 13.6 L1.4 6.6z" fill="url(#gb)" stroke="#101010" stroke-width="1.3"/></svg>
<svg class="a" style="left:1233px;top:196px" width="16" height="16" viewBox="0 0 16 16"><rect x="1.5" y="4.5" width="13" height="7" fill="url(#gb)" stroke="#101010" stroke-width="1.3"/><rect x="13.0" y="3.0" width="3" height="3" fill="#0C74E4" stroke="#0858B4" stroke-width=".3"/><rect x="0.0" y="10.0" width="3" height="3" fill="#0C74E4" stroke="#0858B4" stroke-width=".3"/></svg>
<svg class="a" style="left:1233px;top:218px" width="16" height="16" viewBox="0 0 16 16"><path d="M1.5 14.5 C2.5 7 7 2.5 14.5 1.5" fill="none" stroke="#303030" stroke-width="1.3"/><rect x="0.0" y="13.0" width="3" height="3" fill="#0C74E4" stroke="#0858B4" stroke-width=".3"/><rect x="4.0" y="4.0" width="3" height="3" fill="#0C74E4" stroke="#0858B4" stroke-width=".3"/><rect x="13.0" y="0.0" width="3" height="3" fill="#0C74E4" stroke="#0858B4" stroke-width=".3"/></svg>
<svg class="a" style="left:1233px;top:240px" width="16" height="16" viewBox="0 0 16 16"><circle cx="7.5" cy="8.3" r="6.9" fill="url(#gb)" stroke="#101010" stroke-width="1.3"/><path d="M7.5 8.3 L12.3 3.2" stroke="#1868D8" stroke-width="1.2"/><rect x="6.0" y="6.800000000000001" width="3" height="3" fill="#0C74E4" stroke="#0858B4" stroke-width=".3"/></svg>
<svg class="a" style="left:1233px;top:262px" width="16" height="16" viewBox="0 0 16 16"><path d="M2.5 3 C3.5 .5 7 1 7.5 3 C9 1 13 1.5 12.8 4.5 C15 5 15 8.5 13 9 C16 10.5 15 15 11.5 14.8 C9.5 15.5 7.5 14.5 7.5 12.5 C5.5 13.5 2 12.5 3 9.5 C.5 9 .5 5.5 3 5.5 C2 4.5 2 3.5 2.5 3z" fill="url(#gb)" stroke="#101010" stroke-width="1.4"/></svg>
<svg class="a" style="left:1233px;top:284px" width="16" height="16" viewBox="0 0 16 16"><path d="M1 15.5 C2 9 4.5 7.5 7 9 C10 11 13.5 9 14.8 2" fill="none" stroke="#202020" stroke-width="1.3"/></svg>
<svg class="a" style="left:1233px;top:306px" width="16" height="16" viewBox="0 0 16 16"><ellipse cx="7.5" cy="8.3" rx="6.7" ry="4.2" fill="url(#gb)" stroke="#101010" stroke-width="1.3"/><rect x="-0.5" y="6.800000000000001" width="3" height="3" fill="#0C74E4" stroke="#0858B4" stroke-width=".3"/><rect x="12.5" y="6.800000000000001" width="3" height="3" fill="#0C74E4" stroke="#0858B4" stroke-width=".3"/><rect x="6.0" y="2.7" width="3" height="3" fill="#0C74E4" stroke="#0858B4" stroke-width=".3"/></svg>
<svg class="a" style="left:1233px;top:328px" width="16" height="16" viewBox="0 0 16 16"><ellipse cx="7.5" cy="8.2" rx="6.5" ry="4.2" fill="url(#gb)"/><path d="M1.2 7 A6.6 4.3 0 1 1 7.5 12.5" fill="none" stroke="#303030" stroke-width="1.4"/><rect x="0.0" y="7.0" width="3" height="3" fill="#0C74E4" stroke="#0858B4" stroke-width=".3"/><rect x="6.0" y="11.0" width="3" height="3" fill="#0C74E4" stroke="#0858B4" stroke-width=".3"/></svg>
<svg class="a" style="left:1233px;top:350px" width="16" height="16" viewBox="0 0 16 16"><path d="M5.5 .5 H12 L15.5 3.5 V11 L12 14 H5.5z" fill="url(#gl)" stroke="#7C9CC4" stroke-width=".7"/><rect x="1.8" y="4.8" width="8" height="6" fill="#F0E878" stroke="#1C4C9C" stroke-width="1.1"/><circle cx="9" cy="12" r="3.2" fill="#F0E878" stroke="#3C6CA4" stroke-width="1.1"/><path d="M16 12 V16 H12z" fill="#000"/><rect x="0.0" y="8.7" width="3" height="3" fill="#0C74E4" stroke="#0858B4" stroke-width=".3"/></svg>
<svg class="a" style="left:1233px;top:372px" width="16" height="16" viewBox="0 0 16 16"><rect x="3.5" y="3.5" width="8.5" height="5.5" fill="#F0E878" stroke="#1C4C9C" stroke-width="1.1"/><circle cx="11" cy="11" r="3.4" fill="#F0E878" stroke="#2C5C9C" stroke-width="1.1"/><rect x="1.5" y="7.5" width="3" height="3" fill="#0C74E4" stroke="#0858B4" stroke-width=".3"/></svg>
<svg class="a" style="left:1233px;top:394px" width="16" height="16" viewBox="0 0 16 16"><rect x="7.0" y="7.0" width="3" height="3" fill="#0C74E4" stroke="#0858B4" stroke-width=".3"/></svg>
<svg class="a" style="left:1233px;top:416px" width="16" height="16" viewBox="0 0 16 16"><rect x="4" y="3.5" width="8.5" height="9.5" fill="#fff"/><path d="M4 6 L10.5 13 M4 9.5 L7.5 13 M5.5 3.5 L12.5 11 M9 3.5 L12.5 7.5" stroke="#3C6C9C" stroke-width="1.1"/><path d="M3.4 0v16 M13 0v16 M0 2.9h16 M0 13.3h16" stroke="#3C6C9C" stroke-width="1.4"/><path d="M9 16 L16 8" stroke="#3C6C9C" stroke-width="1" /></svg>
<svg class="a" style="left:1233px;top:438px" width="16" height="16" viewBox="0 0 16 16"><defs><linearGradient id="ggr" x1="0" y1="0" x2="1" y2="1"><stop offset="0" stop-color="#2C3C8C"/><stop offset="1" stop-color="#C8B84C"/></linearGradient></defs><rect x="4" y="3.5" width="8.5" height="9.5" fill="url(#ggr)"/><path d="M3.4 0v16 M13 0v16 M0 2.9h16 M0 13.3h16" stroke="#18203C" stroke-width="1.4"/><path d="M9 16 L16 8" stroke="#18203C" stroke-width="1" /></svg>
<svg class="a" style="left:1233px;top:460px" width="16" height="16" viewBox="0 0 16 16"><path d="M.8 .8 H9.5 L15.2 6 V12.8 H.8z" fill="url(#gl)" stroke="#1C4C8C" stroke-width="1.4"/><circle cx="7.6" cy="7" r="3.1" fill="#ECE9D8" stroke="#2C5C94" stroke-width="1.3"/></svg>
<svg class="a" style="left:1233px;top:482px" width="16" height="16" viewBox="0 0 16 16"><rect x="1.5" y="1.5" width="13.5" height="12.5" fill="#6488C0"/><rect x="1" y="1" width="13.5" height="2.6" fill="#4C7CE8"/><rect x="1" y="3.4" width="13" height="9.8" fill="#7C9CD0"/><rect x="2.0" y="4.5" width="3" height="1.9" fill="#fff"/><rect x="6.2" y="4.5" width="3" height="1.9" fill="#EEF4FC"/><rect x="10.4" y="4.5" width="3" height="1.9" fill="#D8E4F8"/><rect x="2.0" y="7.5" width="3" height="1.9" fill="#fff"/><rect x="6.2" y="7.5" width="3" height="1.9" fill="#EEF4FC"/><rect x="10.4" y="7.5" width="3" height="1.9" fill="#D8E4F8"/><rect x="2.0" y="10.5" width="3" height="1.9" fill="#fff"/><rect x="6.2" y="10.5" width="3" height="1.9" fill="#EEF4FC"/><rect x="10.4" y="10.5" width="3" height="1.9" fill="#D8E4F8"/></svg>
<svg class="a" style="left:1233px;top:504px" width="16" height="16" viewBox="0 0 16 16"><path d="M2.8 14 L7.6 1.3 H8.8 L13.6 14 M4.6 9.4 H11.8" fill="none" stroke="#000" stroke-width="1.7"/></svg>
<svg class="a" style="left:1259px;top:108px" width="16" height="16" viewBox="0 0 16 16"><path d="M0 14.6 H16" stroke="#202020" stroke-width="1"/><g transform="rotate(-49 8 8)"><rect x="-1.5" y="5.8" width="5" height="4.6" rx="1.8" fill="#E86060" stroke="#A83838" stroke-width=".6"/><rect x="3.5" y="5.8" width="3.5" height="4.6" fill="#E8ECF0" stroke="#8C98A8" stroke-width=".5"/><rect x="5" y="5.8" width="1.5" height="4.6" fill="#58C0B0"/><rect x="7" y="5.8" width="10.5" height="4.6" fill="#F0C418"/><path d="M7 6 H17.5" stroke="#1C3C8C" stroke-width="1.1"/><path d="M7 10.2 H17.5" stroke="#C89810" stroke-width=".8"/></g></svg>
<svg class="a" style="left:1259px;top:130px" width="16" height="16" viewBox="0 0 16 16"><circle cx="3.5" cy="3.6" r="3" fill="url(#gb)" stroke="#101010" stroke-width="1.3"/><circle cx="12.3" cy="12" r="3.4" fill="url(#gb)" stroke="#101010" stroke-width="1.3"/><circle cx="9.5" cy="10.5" r="3.4" fill="url(#gb)" stroke="#101010" stroke-width="1.3"/><path d="M6.5 2.5 C9 .5 12 1.5 12.5 4.5" fill="none" stroke="#1C4C8C" stroke-width="1.6"/><path d="M10 4.2 H15.3 L12.6 7.8z" fill="#1C4C8C"/></svg>
<svg class="a" style="left:1259px;top:152px" width="16" height="16" viewBox="0 0 16 16"><path d="M7.5 0 V16" stroke="#1868D8" stroke-width="1.2"/><path d="M5.3 3.8 V13.2 H.7z" fill="url(#gb)" stroke="#101010" stroke-width="1.3"/><path d="M9.7 3.8 V13.2 H14.3z" fill="url(#gb)" stroke="#101010" stroke-width="1.3"/></svg>
<svg class="a" style="left:1259px;top:174px" width="16" height="16" viewBox="0 0 16 16"><path d="M15.5 13.8 H4.5 C-.5 13.8 -.5 8 4.5 7 C5 6.8 5 6 5 5.5 C5 .5 11.5 .5 11.5 5.5 V7.5 H15.5" fill="#F4F0DC" stroke="#101010" stroke-width="1.2"/><path d="M15.5 11.3 H5 C2 11.3 2 9.3 5 9 C7.3 8.8 7.3 7.5 7.3 5.5 C7.3 3.8 9.3 3.8 9.3 5.5 V9.8 H15.5" fill="none" stroke="#1868D8" stroke-width="1.1"/></svg>
<svg class="a" style="left:1259px;top:196px" width="16" height="16" viewBox="0 0 16 16"><rect x="0.7" y="0.7" width="5.8" height="5.8" fill="url(#gb)" stroke="#101010" stroke-width="1.3"/><rect x="0.7" y="9.5" width="5.8" height="5.8" fill="url(#gb)" stroke="#101010" stroke-width="1.3"/><rect x="9.5" y="0.7" width="5.8" height="5.8" fill="url(#gb)" stroke="#101010" stroke-width="1.3"/><rect x="9.5" y="9.5" width="5.8" height="5.8" fill="url(#gb)" stroke="#101010" stroke-width="1.3"/></svg>
<svg class="a" style="left:1259px;top:218px" width="16" height="16" viewBox="0 0 16 16"><path d="M8 0 L11.2 4 H9.2 V6.8 H12 V4.8 L16 8 L12 11.2 V9.2 H9.2 V12 H11.2 L8 16 L4.8 12 H6.8 V9.2 H4 V11.2 L0 8 L4 4.8 V6.8 H6.8 V4 H4.8z" fill="#3C6C9C"/></svg>
<svg class="a" style="left:1259px;top:240px" width="16" height="16" viewBox="0 0 16 16"><path d="M9.5 2.2 A6.3 6.3 0 1 1 2.8 5.8" fill="none" stroke="#3C6C9C" stroke-width="1.9"/><path d="M1 1.5 L7.8 .2 L5.2 6.8z" fill="#3C6C9C"/></svg>
<svg class="a" style="left:1259px;top:262px" width="16" height="16" viewBox="0 0 16 16"><rect x=".7" y=".7" width="14.6" height="14.6" fill="url(#gb)"/><path d="M.7 .7 H15.3 V15.3 H10" fill="none" stroke="#3C6C9C" stroke-width="1.4"/><rect x=".5" y="7.5" width="8" height="8" fill="none" stroke="#000" stroke-width="1" stroke-dasharray="1 1" shape-rendering="crispEdges"/></svg>
<svg class="a" style="left:1259px;top:284px" width="16" height="16" viewBox="0 0 16 16"><path d="M7.5 .7 L15.5 15.3 H7.5z" fill="url(#gb)" stroke="#3C6C9C" stroke-width="1.3"/><rect x=".7" y=".7" width="5" height="14.6" fill="url(#gb)"/><path d="M5.5 .7 H.7 V15.3 H5.5" fill="none" stroke="#000" stroke-width="1.4"/><path d="M5.5 1 V15" stroke="#000" stroke-width="1" stroke-dasharray="1 1" shape-rendering="crispEdges"/></svg>
<svg class="a" style="left:1259px;top:306px" width="16" height="16" viewBox="0 0 16 16"><path d="M0 7.2 H4.5" stroke="#000" stroke-width="1.3"/><path d="M3.9 12.8 L9.9 2" stroke="#1868D8" stroke-width="1.3"/><path d="M8 7.2 H16" stroke="#1868D8" stroke-width="1.2" stroke-dasharray="2 1.2"/></svg>
<svg class="a" style="left:1259px;top:328px" width="16" height="16" viewBox="0 0 16 16"><path d="M0 8.5 H4.5" stroke="#000" stroke-width="1.3"/><path d="M6 8.5 H11" stroke="#1868D8" stroke-width="1.2" stroke-dasharray="2 1.2"/><path d="M9.9 13.7 L15.7 3" stroke="#1868D8" stroke-width="1.3"/></svg>
<svg class="a" style="left:1259px;top:350px" width="16" height="16" viewBox="0 0 16 16"><rect x=".7" y="2.8" width="14.6" height="11" fill="url(#gb)" stroke="#101010" stroke-width="1.4"/><rect x="9" y="1.3" width="3" height="3" fill="#3C6CAC"/></svg>
<svg class="a" style="left:1259px;top:372px" width="16" height="16" viewBox="0 0 16 16"><rect x=".7" y="2.8" width="14.6" height="11" fill="url(#gb)"/><path d="M3.5 2.8 H.7 V13.8 H15.3 V2.8 H12.5" fill="none" stroke="#101010" stroke-width="1.4"/><rect x="2" y="1.3" width="3" height="3" fill="#3C6CAC"/><rect x="11" y="1.3" width="3" height="3" fill="#3C6CAC"/></svg>
<svg class="a" style="left:1259px;top:394px" width="16" height="16" viewBox="0 0 16 16"><path d="M0 8 H16" stroke="#000" stroke-width="2"/><path d="M3.6 3.8 L7.8 8 L3.6 12.2 C5.4 9.2 5.4 6.8 3.6 3.8z M12.4 3.8 L8.2 8 L12.4 12.2 C10.6 9.2 10.6 6.8 12.4 3.8z" fill="#2C5488" stroke="#2C5488" stroke-width=".5" stroke-linejoin="round"/></svg>
<svg class="a" style="left:1259px;top:416px" width="16" height="16" viewBox="0 0 16 16"><path d="M.5 9 V.5 H8.5" fill="none" stroke="#000" stroke-width="1" stroke-dasharray="1 1" shape-rendering="crispEdges"/><path d="M8.5 .7 H15.5 M.7 9 V15.8" stroke="#000" stroke-width="1.4" fill="none"/><path d="M.7 9 L8.5 1.2" stroke="#1868D8" stroke-width="1.5"/></svg>
<svg class="a" style="left:1259px;top:438px" width="16" height="16" viewBox="0 0 16 16"><path d="M.5 8.5 V.5 H8.5" fill="none" stroke="#000" stroke-width="1" stroke-dasharray="1 1" shape-rendering="crispEdges"/><path d="M8.5 .7 H15.5 M.7 8.5 V15.8" stroke="#000" stroke-width="1.4" fill="none"/><path d="M.9 8.5 C1.2 4 4 1.2 8.5 1" stroke="#1868D8" stroke-width="1.6" fill="none"/></svg>
<svg class="a" style="left:1259px;top:460px" width="16" height="16" viewBox="0 0 16 16"><path d="M5 3 L6.5 6 L9 4.5 L8.5 7.5 L11 9 L8.5 10.5 L9.5 14 L6.5 12 L4.5 15 L4 11.5 L.5 11 L3 9 L.5 6 L4 6.5z" fill="#F8D020"/><path d="M9 5.5 L15 .5" stroke="#303030" stroke-width="1.2"/><path d="M13 1 l2.5 -.8 M14.5 3.5 l1.3 1.5 M12 .2 l.5 2" stroke="#A8B4CC" stroke-width="1"/><g transform="rotate(-42 6 10)"><rect x=".5" y="8" width="11" height="4.2" rx="1.2" fill="#E02828"/><rect x=".5" y="8" width="11" height="1.4" rx=".7" fill="#F47070"/></g><path d="M6 5 L7.5 8 M10.5 9 L7.5 8" stroke="#F8F8F8" stroke-width=".9"/></svg>
<svg class="a" style="left:1259px;top:500px" width="16" height="16" viewBox="0 0 16 16"><defs><linearGradient id="gdo" x1="0" y1="0" x2="1" y2="1"><stop offset="0" stop-color="#fff"/><stop offset="1" stop-color="#B4CCE0"/></linearGradient></defs><rect x=".6" y=".6" width="8" height="6" fill="url(#gdo)" stroke="#5C88C0" stroke-width="1"/><rect x="7.5" y="9.5" width="8" height="6" fill="url(#gdo)" stroke="#5C88C0" stroke-width="1"/><rect x="3.5" y="3.5" width="9.3" height="9" fill="#5078B0" stroke="#2C5490" stroke-width="1"/></svg>
<svg class="a" style="left:1259px;top:522px" width="16" height="16" viewBox="0 0 16 16"><rect x="3.5" y="3.5" width="9.3" height="9" fill="#5078B0" stroke="#2C5490" stroke-width="1"/><rect x=".6" y=".6" width="8" height="6" fill="url(#gdo)" stroke="#5C88C0" stroke-width="1"/><rect x="7.5" y="9.5" width="8" height="6" fill="url(#gdo)" stroke="#5C88C0" stroke-width="1"/></svg>
<svg class="a" style="left:1259px;top:544px" width="16" height="16" viewBox="0 0 16 16"><rect x="4.5" y="5" width="11" height="9" fill="url(#gdo)" stroke="#5C88C0" stroke-width="1"/><rect x="1.5" y=".6" width="11.5" height="9" fill="#5078B0" stroke="#2C5490" stroke-width="1.1" fill-opacity=".92"/></svg>
<svg class="a" style="left:1259px;top:566px" width="16" height="16" viewBox="0 0 16 16"><rect x="1.5" y=".6" width="11.5" height="9" fill="#5078B0" stroke="#2C5490" stroke-width="1.1"/><rect x="4.5" y="5" width="11" height="9" fill="url(#gdo)" stroke="#5C88C0" stroke-width="1" fill-opacity=".92"/></svg>
<div class="a" style="left:0;top:94px;width:1227px;height:2px;background:linear-gradient(#A8A491 0,#A8A491 1px,#5E5C4E 1px,#5E5C4E 2px)"></div>
<div id="draw" class="a"></div>
<svg class="a" style="left:0;top:0" width="1280" height="998" viewBox="0 0 1280 998" shape-rendering="crispEdges"><defs><clipPath id="dc"><rect x="2" y="96" width="1224" height="797"/></clipPath></defs><g clip-path="url(#dc)" fill="none" stroke="#fff" stroke-width="1"><path d="M154.5 710.5 L164.5 636.5 L352.5 409.5 L352.5 199.5 L391.5 166.5 L880.5 166.5 L920.5 199.5 L920.5 409.5 L1131.5 636.5 L1139.5 711.5"/><path d="M-1.5 897.3 L154.5 710.5 L391.5 423.5 L391.5 166.5"/><path d="M880.5 166.5 L880.5 423.5 L1139.5 711.5 L1226.5 807.5"/><path d="M391.5 214.5 L880.5 214.5"/><path d="M465.5 166.5 L465.5 214.5"/><path d="M798.5 166.5 L798.5 214.5"/><path d="M157.5 682.5 L-1.5 871.2"/><path d="M1136.5 685.5 L1226.5 784.5"/><path d="M391.5 423.5 L405.5 373.5 L429.5 324.5 L465.5 282.5 L507.5 250.5 L556.5 227.5 L608.5 215.5 L664.5 215.5 L716.5 227.5 L765.5 250.5 L806.5 281.5 L842.5 324.5 L867.5 373.5 L880.5 423.5"/><path d="M361.5 459.5 Q375.5 487 375.5 507.5 L375.5 566.5 L898.5 566.5 L898.5 504.5 Q898.5 486 912.5 458.5"/><path d="M30.5 896.4 L268.5 605.5 C277.2 594.9 292.6 586.5 303.5 586.5 L985.5 586.5 C996.4 586.5 1011.8 594.9 1020.5 605.5 L1226.5 860.5"/><path d="M96.5 896.4 L266.5 688.5 C277.0 675.6 296.4 665.5 310.5 665.5 L982.5 665.5 C996.9 665.5 1014.5 673.4 1022.5 683.5 L1192.5 897.5"/><path d="M1128.5 548.5 L1192.5 548.5"/><path d="M1160.5 517.5 L1160.5 581.5"/><rect x="1157.5" y="545.5" width="7" height="7"/><rect x="17.5" y="858.5" width="15" height="16"/><path d="M25.5 858.5 L25.5 790.5"/><path d="M18.5 790.5 L25.5 772.5 L32.5 790.5z" fill="#505050"/><path d="M25.5 772.5 L23.5 790.5"/><path d="M25.5 772.5 L27.5 790.5"/><path d="M25.5 772.5 L25.5 790.5"/><path d="M32.5 866.5 L101.5 866.5"/><path d="M101.5 859.5 L120.5 866.5 L101.5 873.5z" fill="#505050"/><path d="M120.5 866.5 L101.5 864.5"/><path d="M120.5 866.5 L101.5 868.5"/><path d="M120.5 866.5 L101.5 866.5"/><path d="M20.5 737.5 L27.5 746.5 L34.5 737.5"/><path d="M27.5 746.5 L27.5 758.5"/><path d="M138.5 857.5 L151.5 877.5"/><path d="M151.5 857.5 L138.5 877.5"/></g></svg>
<div class="a" style="left:0;top:893px;width:1227px;height:17px;background:#ECE9D8;border-top:1px solid #FBF8E8"></div>
<div class="a" style="left:0;top:909px;width:1227px;height:2px;background:#fff"></div>
<div class="a" style="left:1227px;top:910px;width:53px;height:1px;background:#fff"></div>
<div class="a" style="left:1227px;top:94px;width:1px;height:816px;background:#fff"></div>
<div class="a" style="left:0;top:95px;width:2px;height:813px;background:#B4B1A1"></div>
<div class="a" style="left:2px;top:893px;width:18px;height:15px;background:#ECE9D8;border:1px solid;border-color:#fff #ACA899 #ACA899 #fff"><svg class="a" style="left:-1px;top:-1px" width="18" height="15" viewBox="0 0 18 15" fill="#000"><path d="M4 3v9h1.4v-9zM11 3v9l-5-4.5z"/></svg></div>
<div class="a" style="left:20px;top:893px;width:18px;height:15px;background:#ECE9D8;border:1px solid;border-color:#fff #ACA899 #ACA899 #fff"><svg class="a" style="left:-1px;top:-1px" width="18" height="15" viewBox="0 0 18 15" fill="#000"><path d="M11 3v9l-5-4.5z"/></svg></div>
<div class="a" style="left:38px;top:893px;width:18px;height:15px;background:#ECE9D8;border:1px solid;border-color:#fff #ACA899 #ACA899 #fff"><svg class="a" style="left:-1px;top:-1px" width="18" height="15" viewBox="0 0 18 15" fill="#000"><path d="M6.5 3v9l5-4.5z"/></svg></div>
<div class="a" style="left:56px;top:893px;width:18px;height:15px;background:#ECE9D8;border:1px solid;border-color:#fff #ACA899 #ACA899 #fff"><svg class="a" style="left:-1px;top:-1px" width="18" height="15" viewBox="0 0 18 15" fill="#000"><path d="M6 3v9l5-4.5zM11.6 3v9h1.4v-9z"/></svg></div>
<svg class="a" style="left:74px;top:893px" width="120" height="16" viewBox="0 0 120 16"><path d="M57.8 0 L58.8 14 L104.8 14 L108.6 0z" fill="#ECE9D8"/><path d="M58 .5 H108" stroke="#FBF8E8" stroke-width="1"/><path d="M57.8 0 L58.6 14.5 L104.8 14.5 L108.6 0" fill="none" stroke="#000" stroke-width="1"/><path d="M110 0 L106.2 14.5" stroke="#fff" stroke-width="1" fill="none"/><path d="M6 0 L9.6 15 L53 15 L57 0 Z" fill="#000"/><path d="M3.9 0 L7.4 15" stroke="#000" stroke-width="1" fill="none"/><path d="M5 0 L8.5 15" stroke="#F4F0DC" stroke-width="1" fill="none"/><path d="M57.6 0 L53.8 15" stroke="#F4F0DC" stroke-width=".8" fill="none"/></svg>
<span class="t" style="left:85.6px;top:893px;font-size:13px;color:#fff;transform-origin:0 0;transform:scaleX(0.8271);">Модель</span>
<span class="t" style="left:136.4px;top:893px;font-size:13px;color:#000;transform-origin:0 0;transform:scaleX(0.7781);">Layout1</span>
<div class="a" style="left:0;top:914px;width:1280px;height:2px;background:#000;border-top:1px solid #6E6C60"></div>
<div class="a" style="left:0;top:916px;width:1280px;height:1px;background:#fff"></div>
<div class="gripv" style="left:6px;top:924px;height:40px"></div><div class="gripv" style="left:10px;top:924px;height:40px"></div>
<div class="a" style="left:17px;top:926px;width:1256px;height:24px;background:#fff;border-top:1px solid #000;border-left:1px solid #000;border-bottom:1px solid #ACA899;border-right:1px solid #D4D0C8"></div>
<div class="a" style="left:17px;top:950px;width:1239px;height:19px;background:#fff;border-left:1px solid #000;border-bottom:1px solid #F6F3E6"></div>
<span class="t" style="left:18.3px;top:929px;font:13px 'Liberation Mono',monospace;letter-spacing:.2px;color:#000">[Линия выбора/пеРечеркивание/Проекция/Кромка/уДалить/Отменить]:</span>
<span class="t" style="left:18.3px;top:953px;font:13px 'Liberation Mono',monospace;letter-spacing:.2px;color:#000">Команда:</span>
<div class="a" style="left:1257px;top:928px;width:14px;height:10px;border-radius:2px;background:linear-gradient(135deg,#CAD8FC,#B7C8F7 55%,#A9BCF3);border:1px solid #fff;box-shadow:0 0 0 1px #B4C4EE inset"><svg class="a" style="left:2px;top:1px" width="7" height="6" viewBox="0 0 7 6" fill="none" stroke="#4D6185"><path d="M1 4.5 L3.5 2 L6 4.5" stroke-width="1.6"/></svg></div>
<div class="a" style="left:1257px;top:939px;width:14px;height:10px;border-radius:2px;background:linear-gradient(135deg,#CAD8FC,#B7C8F7 55%,#A9BCF3);border:1px solid #fff;box-shadow:0 0 0 1px #B4C4EE inset"><svg class="a" style="left:2px;top:1px" width="7" height="6" viewBox="0 0 7 6" fill="none" stroke="#4D6185"><path d="M1 1.5 L3.5 4 L6 1.5" stroke-width="1.6"/></svg></div>
<div class="a" style="left:1186px;top:950px;width:70px;height:18px;background:linear-gradient(#F3F1EC,#FEFEFB)"></div>
<div class="a" style="left:1189px;top:952px;width:15px;height:16px;border-radius:2px;background:linear-gradient(135deg,#CAD8FC,#B7C8F7 55%,#A9BCF3);border:1px solid #fff;box-shadow:0 0 0 1px #B4C4EE inset"><svg class="a" style="left:2px;top:2px" width="8" height="10" viewBox="0 0 8 10" fill="none" stroke="#4D6185"><path d="M6 1 L2 5 L6 9" stroke-width="2"/></svg></div>
<div class="a" style="left:1206px;top:952px;width:15px;height:16px;border-radius:2px;background:linear-gradient(135deg,#CAD8FC,#B7C8F7 55%,#A9BCF3);border:1px solid #fff;box-shadow:0 0 0 1px #B4C4EE inset"><svg class="a" style="left:2px;top:3px" width="9" height="8" viewBox="0 0 9 8" fill="none" stroke="#4D6185"><path d="M1.5 1v6M3.5 1v6M5.5 1v6M7.5 1v6" stroke="#EEF4FE" stroke-width="1"/></svg></div>
<div class="a" style="left:1238px;top:952px;width:15px;height:16px;border-radius:2px;background:linear-gradient(135deg,#CAD8FC,#B7C8F7 55%,#A9BCF3);border:1px solid #fff;box-shadow:0 0 0 1px #B4C4EE inset"><svg class="a" style="left:2px;top:2px" width="8" height="10" viewBox="0 0 8 10" fill="none" stroke="#4D6185"><path d="M2 1 L6 5 L2 9" stroke-width="2"/></svg></div>
<div class="a" style="left:0;top:969px;width:1280px;height:25px;background:linear-gradient(#F1EEDF 0,#F1EEDF 1px,#fff 1px,#fff 2px,#ECE9D8 2px,#ECE9D8 3px,#B0AC98 3px,#B0AC98 4px,#D2CEBB 4px,#D2CEBB 5px,#E5E2D0 5px,#E5E2D0 6px,#EEEBDB 6px,#E4E0CD 25px)"></div>
<div class="a" style="left:5px;top:975px;width:189px;height:18px;border:1px solid;border-color:#ACA899 #fff #fff #ACA899"></div>
<span class="t" style="left:7.6px;top:978px;font-size:13px;color:#000;transform-origin:0 0;transform:scaleX(0.8275)">484.5871, 787.1564, 0.0000</span>
<div class="a" style="left:198px;top:975px;width:26px;height:18px;border:1px solid;border-color:#fff #ACA899 #ACA899 #fff"></div>
<span class="t" style="left:200.2px;top:978px;font-size:12.5px;color:#000;transform-origin:0 0;transform:scaleX(0.809)">ШАГ</span>
<div class="a" style="left:228px;top:975px;width:39px;height:18px;border:1px solid;border-color:#fff #ACA899 #ACA899 #fff"></div>
<span class="t" style="left:230.29999999999998px;top:978px;font-size:12.5px;color:#000;transform-origin:0 0;transform:scaleX(0.847)">СЕТКА</span>
<div class="a" style="left:271px;top:974px;width:34px;height:19px;border:1px solid;background:#F5F3EA;border-color:#000 #fff #fff #000;box-shadow:1px 1px 0 #ACA899 inset"></div>
<span class="t" style="left:274.0px;top:979px;font-size:12.5px;color:#000;transform-origin:0 0;transform:scaleX(0.846)">ОРТО</span>
<div class="a" style="left:309px;top:975px;width:68px;height:18px;border:1px solid;border-color:#fff #ACA899 #ACA899 #fff"></div>
<span class="t" style="left:311.2px;top:978px;font-size:12.5px;color:#000;transform-origin:0 0;transform:scaleX(0.850)">ОТС-ПОЛЯР</span>
<div class="a" style="left:381px;top:975px;width:63px;height:18px;border:1px solid;border-color:#fff #ACA899 #ACA899 #fff"></div>
<span class="t" style="left:383.09999999999997px;top:978px;font-size:12.5px;color:#000;transform-origin:0 0;transform:scaleX(0.882)">ПРИВЯЗКА</span>
<div class="a" style="left:448px;top:974px;width:73px;height:19px;border:1px solid;background:#F5F3EA;border-color:#000 #fff #fff #000;box-shadow:1px 1px 0 #ACA899 inset"></div>
<span class="t" style="left:451.5px;top:979px;font-size:12.5px;color:#000;transform-origin:0 0;transform:scaleX(0.825)">ОТС-ОБЪЕКТ</span>
<div class="a" style="left:525px;top:974px;width:35px;height:19px;border:1px solid;background:#F5F3EA;border-color:#000 #fff #fff #000;box-shadow:1px 1px 0 #ACA899 inset"></div>
<span class="t" style="left:529.1px;top:979px;font-size:12.5px;color:#000;transform-origin:0 0;transform:scaleX(0.853)">ДПСК</span>
<div class="a" style="left:564px;top:974px;width:29px;height:19px;border:1px solid;background:#F5F3EA;border-color:#000 #fff #fff #000;box-shadow:1px 1px 0 #ACA899 inset"></div>
<span class="t" style="left:567.7px;top:979px;font-size:12.5px;color:#000;transform-origin:0 0;transform:scaleX(0.880)">ДИН</span>
<div class="a" style="left:598px;top:975px;width:24px;height:18px;border:1px solid;border-color:#fff #ACA899 #ACA899 #fff"></div>
<span class="t" style="left:599.2px;top:978px;font-size:12.5px;color:#000;transform-origin:0 0;transform:scaleX(0.813)">ВЕС</span>
<div class="a" style="left:626px;top:974px;width:52px;height:19px;border:1px solid;background:#F5F3EA;border-color:#000 #fff #fff #000;box-shadow:1px 1px 0 #ACA899 inset"></div>
<span class="t" style="left:629.0px;top:979px;font-size:12.5px;color:#000;transform-origin:0 0;transform:scaleX(0.891)">МОДЕЛЬ</span>
<div class="a" style="left:1174px;top:975px;width:64px;height:18px;background:#F0EEE2;border:1px solid;border-color:#ACA899 #fff #fff #ACA899"></div>
<svg class="a" style="left:1178px;top:976px" width="16" height="16" viewBox="0 0 16 16"><path d="M2 1 C1 6 4 10 9 10.5 C8 5 6 2 2 1z" fill="#A8BCDC" stroke="#5C74A8" stroke-width=".8"/><path d="M4 6.5 L9.5 1" stroke="#5C74A8" stroke-width="1"/><path d="M3 12.5 h5 M5.5 9.5 v3" stroke="#8CA0C8" stroke-width="1.2"/><path d="M10 5 L15.8 15.3 H4.8z" fill="#F8E028" stroke="#C8A810" stroke-width=".8"/><path d="M10.2 8.2 v3.6 M10.2 12.8 v1.4" stroke="#202020" stroke-width="1.6"/></svg>
<svg class="a" style="left:1198px;top:976px" width="16" height="16" viewBox="0 0 16 16"><path d="M11.5 8 V4 C11.5 .5 16 .5 15.6 4 V7.5" fill="none" stroke="#D8A818" stroke-width="1.6"/><rect x=".5" y="6.8" width="11" height="8.7" rx="1.5" fill="#E8C020" stroke="#9C7808" stroke-width=".8"/><path d="M1 9 h10 M1 11 h10 M1 13 h10" stroke="#A88410" stroke-width=".8"/><rect x="5" y="7.5" width="2.2" height="7.5" fill="#FFF4A0" opacity=".8"/></svg>
<svg class="a" style="left:1218px;top:977px" width="16" height="16" viewBox="0 0 16 16"><path d="M.5 .5 H8.5 L12 4 V14 H.5z" fill="#4C74AC" stroke="#2C4C84" stroke-width=".8"/><path d="M8.5 .5 V4 H12z" fill="#D8E4F4"/><path d="M4.5 2 V13 M2 4.5 H7" stroke="#fff" stroke-width="1.1"/><circle cx="4.5" cy="4.5" r="1.6" fill="#4C74AC" stroke="#fff" stroke-width="1"/><circle cx="11.5" cy="10.8" r="4.3" fill="#28B428" stroke="#188818" stroke-width=".6"/><path d="M9.2 10.8 L11 12.8 L14 8.8" fill="none" stroke="#fff" stroke-width="1.6"/></svg>
<svg class="a" style="left:1244px;top:986px" width="7" height="4" viewBox="0 0 7 4"><path d="M0 0h7L3.5 4z" fill="#000"/></svg>
<div class="a" style="left:1260px;top:975px;width:16px;height:16px;border:2px solid #2A559C;box-shadow:0 0 0 1px #fff inset;background:linear-gradient(135deg,#DCE8F4,#A8C0DC)"></div>
<div class="a" style="left:0;top:994px;width:1280px;height:4px;background:linear-gradient(#2A62D6 0,#2A62D6 1px,#4A8AEC 1px,#3E82E8 4px)"></div>
<div class="a" style="left:96px;top:994px;width:259px;height:4px;background:linear-gradient(#4C88E8 0,#4C88E8 1px,#3C7CE4 1px,#3474DC 4px)"></div>
<div class="a" style="left:0;top:994px;width:92px;height:4px;border-radius:0 3px 0 0;background:linear-gradient(#348A38 0,#348A38 1px,#7CBC80 1px,#96C89A 4px)"></div>
<div class="a" style="left:1188px;top:994px;width:92px;height:4px;border-left:1px solid #1450B0;background:linear-gradient(#1580D8 0,#1580D8 1px,#24A8F4 1px,#1C9CEC 4px)"></div>
</div></body></html>
